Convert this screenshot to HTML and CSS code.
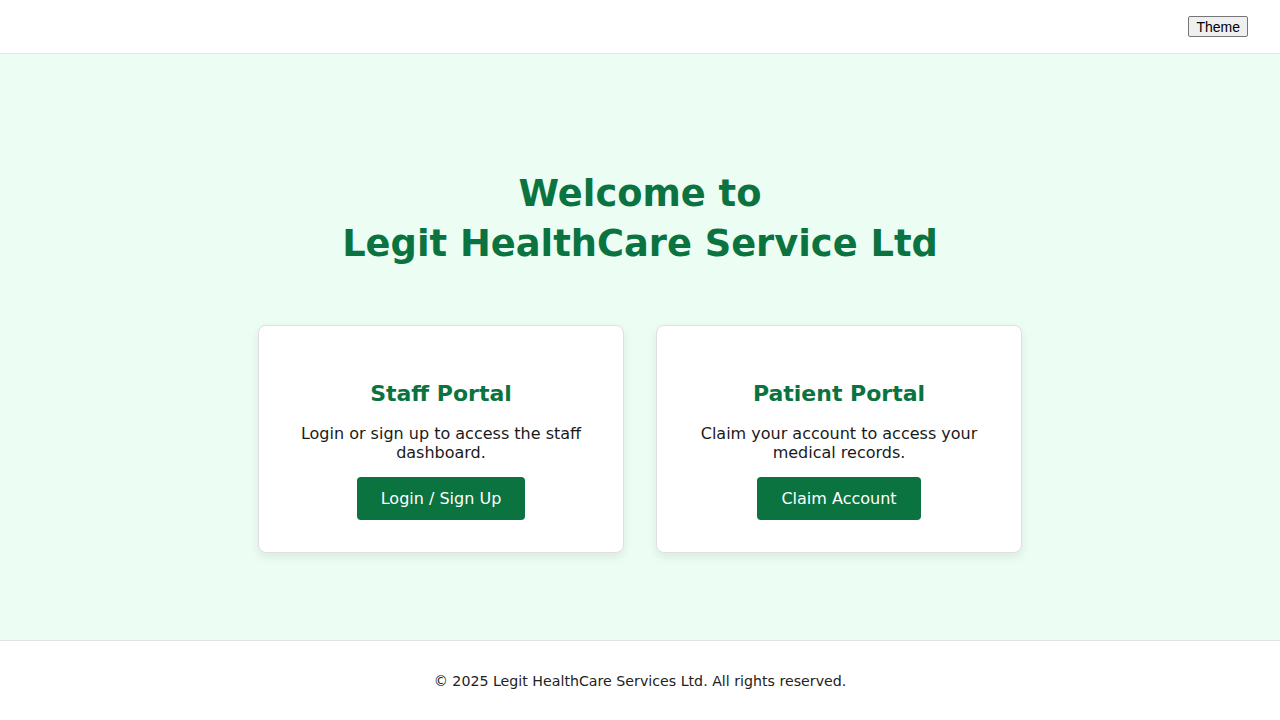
FILE: index.html
```html
<!DOCTYPE html>
<html lang="en">
<head>
<meta charset="utf-8">
<title>Legit HealthCare Service Ltd</title>
<link rel="stylesheet" href="styles.css">
</head>
<body>
<header class="topbar">
  <button class="theme-btn">Theme</button>
</header>
<main class="hero">
  <h1 class="hero-title">Welcome to<br>Legit HealthCare Service Ltd</h1>
  <div class="portals">
    <section class="card">
      <h2 class="card-title">Staff Portal</h2>
      <p class="card-text">Login or sign up to access the staff dashboard.</p>
      <a class="card-btn" href="#">Login / Sign Up</a>
    </section>
    <section class="card">
      <h2 class="card-title">Patient Portal</h2>
      <p class="card-text">Claim your account to access your medical records.</p>
      <a class="card-btn" href="#">Claim Account</a>
    </section>
  </div>
</main>
<footer class="footer">
  <p class="footer-text">© 2025 Legit HealthCare Services Ltd. All rights reserved.</p>
</footer>
</body>
</html>
```
FILE: styles.css
```css
* { box-sizing: border-box; }
html, body { margin: 0; padding: 0; }
body {
  font-family: "DejaVu Sans", "Open Sans", sans-serif;
  color: #1a1a1a;
  background: #ffffff;
  height: 720px;
  display: flex;
  flex-direction: column;
}
.topbar {
  height: 54px;
  border-bottom: 1px solid #e2e8e4;
  display: flex;
  justify-content: flex-end;
  align-items: flex-start;
  padding: 16px 32px 0 0;
  background: #fff;
}
.theme-btn {
  font-family: "Liberation Sans", Arial, sans-serif;
  font-size: 14px;
  height: 21px;
  padding: 0 7px;
  border: 1px solid #767676;
  border-radius: 2px;
  background: #efefef;
  color: #000;
}
.hero {
  flex: 1;
  background: #ecfdf3;
  display: flex;
  flex-direction: column;
  align-items: center;
  padding-top: 115px;
}
.hero-title {
  margin: 0;
  text-align: center;
  color: #0a7340;
  font-size: 36.8px;
  line-height: 50px;
  font-weight: 700;
}
.portals {
  margin-top: 56px;
  display: flex;
  gap: 32px;
}
.card {
  width: 366px;
  height: 228px;
  background: #fff;
  border: 1px solid #e0e0e0;
  border-radius: 8px;
  box-shadow: 0 4px 10px rgba(0,0,0,0.08);
  padding: 52px 40px 0;
  display: flex;
  flex-direction: column;
  align-items: center;
  text-align: center;
}
.card-title {
  margin: 0;
  font-size: 22px;
  line-height: 32px;
  color: #0a7340;
  font-weight: 700;
}
.card-text {
  margin: 14px 0 0;
  font-size: 16px;
  line-height: 19px;
  color: #1a1a1a;
}
.card-btn {
  margin-top: 15px;
  display: inline-block;
  background: #0a7340;
  color: #fff;
  text-decoration: none;
  font-size: 16px;
  line-height: 43px;
  height: 43px;
  padding: 0 24px;
  border-radius: 4px;
}
.footer {
  height: 80px;
  border-top: 1px solid #e2e2e2;
  display: flex;
  align-items: center;
  justify-content: center;
}
.footer-text {
  margin: 0;
  font-size: 14.2px;
  color: #222;
}
```
